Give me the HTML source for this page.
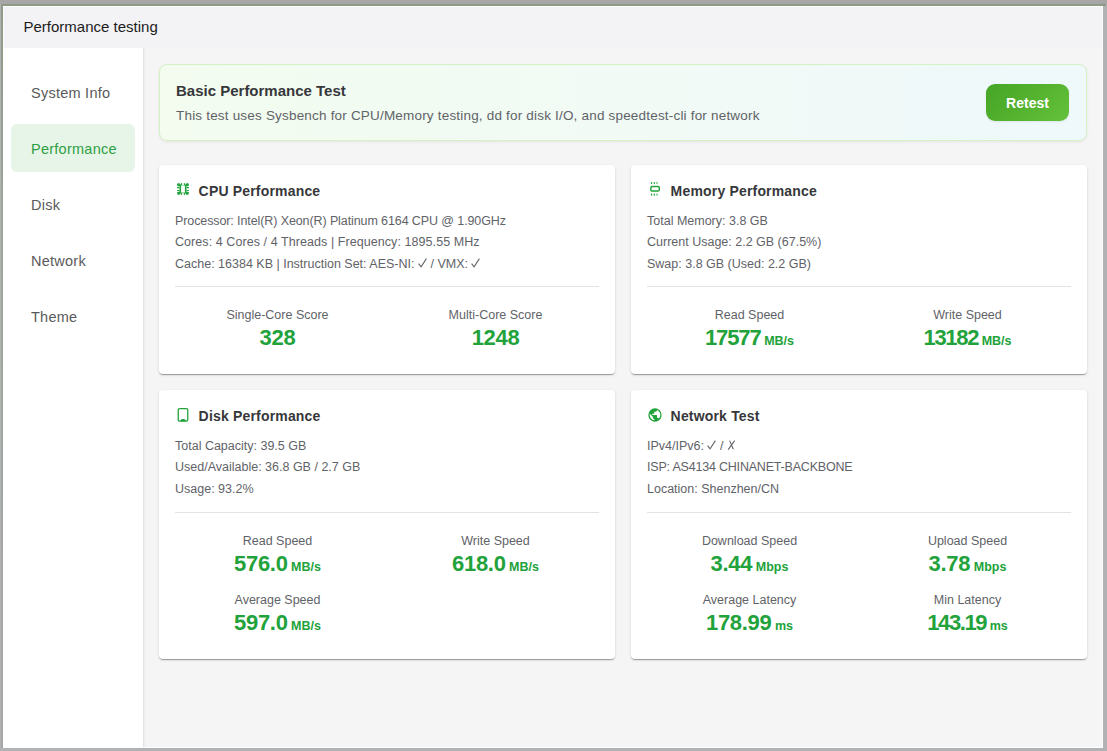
<!DOCTYPE html>
<html><head><meta charset="utf-8"><title>Performance testing</title>
<style>
html,body{margin:0;padding:0;}
body{width:1107px;height:751px;overflow:hidden;position:relative;background:#b1b2b4;font-family:"Liberation Sans", sans-serif;}
.t{position:absolute;white-space:nowrap;font-family:"Liberation Sans", sans-serif;}
#dlg{position:absolute;left:3px;top:6px;width:1100px;height:742px;background:#f5f5f5;overflow:hidden;}
#hdr{position:absolute;left:0;top:0;width:1100px;height:41px;background:#f3f2f5;}
#side{position:absolute;left:0;top:42px;width:140px;height:700px;background:#ffffff;box-shadow:1px 0 0 #e4e4e4, 2px 0 2px rgba(0,0,0,0.04);}
</style></head>
<body>
<div style="position:absolute;left:0;top:0;width:1107px;height:4px;background:#a6a6a6;"></div><div style="position:absolute;left:1px;top:4px;width:1105px;height:2px;background:#8c9a86;"></div><div style="position:absolute;left:1px;top:4px;width:2px;height:744px;background:linear-gradient(#8c9a86,#9ea69b 30%,#a7a7a7);"></div>
<div id="dlg"><div id="hdr"></div><div id="side"></div><div style="position:absolute;left:0;top:0;right:0;bottom:0;box-shadow:inset 0 0 0 1px rgba(255,255,255,0.75);"></div></div>
<div id="top" style="position:absolute;left:0;top:0;width:1107px;height:751px;">
<div class="t" style="left:23.50px;top:17.05px;font-size:15px;line-height:19.5px;font-weight:400;color:#1c1c1c;">Performance testing</div>
<div style="position:absolute;left:11px;top:124px;width:124px;height:48px;background:#e7f5e9;border-radius:6px;"></div>
<div class="t" style="left:31.00px;top:83.55px;font-size:14.5px;line-height:18.85px;font-weight:400;color:#5a5a5a;letter-spacing:0.25px;">System Info</div>
<div class="t" style="left:31.00px;top:139.55px;font-size:14.5px;line-height:18.85px;font-weight:400;color:#2ea043;letter-spacing:0.25px;">Performance</div>
<div class="t" style="left:31.00px;top:195.55px;font-size:14.5px;line-height:18.85px;font-weight:400;color:#5a5a5a;letter-spacing:0.25px;">Disk</div>
<div class="t" style="left:31.00px;top:251.55px;font-size:14.5px;line-height:18.85px;font-weight:400;color:#5a5a5a;letter-spacing:0.25px;">Network</div>
<div class="t" style="left:31.00px;top:307.55px;font-size:14.5px;line-height:18.85px;font-weight:400;color:#5a5a5a;letter-spacing:0.25px;">Theme</div>
<div style="position:absolute;left:159px;top:64px;width:928px;height:77px;box-sizing:border-box;border:1px solid #d4f1c4;border-radius:8px;background:linear-gradient(90deg,#f3fcef 0%,#f1faf6 60%,#eff8fb 100%);box-shadow:0 1px 3px rgba(0,0,0,0.07);"></div>
<div class="t" style="left:176.00px;top:80.85px;font-size:15px;line-height:19.5px;font-weight:700;color:#36373a;">Basic Performance Test</div>
<div class="t" style="left:176.00px;top:107.35px;font-size:13.5px;line-height:17.55px;font-weight:400;color:#5f6368;letter-spacing:0.19px;">This test uses Sysbench for CPU/Memory testing, dd for disk I/O, and speedtest-cli for network</div>
<div style="position:absolute;left:986px;top:84px;width:83px;height:37px;border-radius:9px;background:linear-gradient(135deg,#45a526 0%,#55b22f 50%,#63c13a 100%);box-shadow:0 1px 2px rgba(0,0,0,0.08);"></div>
<div class="t" style="left:986.00px;width:83px;text-align:center;top:93.55px;font-size:14px;line-height:18.2px;font-weight:700;color:#ffffff;">Retest</div>
<div style="position:absolute;left:159px;top:165px;width:456px;height:209.4px;background:#fff;border-radius:4px;box-shadow:0 2px 1px -1px rgba(0,0,0,.2),0 1px 1px 0 rgba(0,0,0,.14),0 1px 3px 0 rgba(0,0,0,.12);"></div>
<svg style="position:absolute;left:177px;top:183px" width="12" height="12" viewBox="0 0 12 12"><g fill="#22a23a">
<rect x="0.2" y="0.2" width="3" height="3" rx="1"/><rect x="8.8" y="0.2" width="3" height="3" rx="1"/><rect x="0.2" y="8.8" width="3" height="3" rx="1"/><rect x="8.8" y="8.8" width="3" height="3" rx="1"/>
<rect x="2.5" y="1.5" width="1.6" height="9"/><rect x="7.9" y="1.5" width="1.6" height="9"/>
<rect x="0" y="4.1" width="2.6" height="1.1" rx="0.5"/><rect x="0" y="6.9" width="2.6" height="1.1" rx="0.5"/><rect x="9.4" y="4.1" width="2.6" height="1.1" rx="0.5"/><rect x="9.4" y="6.9" width="2.6" height="1.1" rx="0.5"/>
<rect x="4.05" y="0" width="1.1" height="2.2" rx="0.5"/><rect x="6.85" y="0" width="1.1" height="2.2" rx="0.5"/><rect x="4.05" y="9.8" width="1.1" height="2.2" rx="0.5"/><rect x="6.85" y="9.8" width="1.1" height="2.2" rx="0.5"/>
<rect x="4.1" y="2" width="3.8" height="0.7" opacity="0.5"/><rect x="4.1" y="9.1" width="3.8" height="0.8" opacity="0.5"/>
</g></svg>
<div class="t" style="left:198.60px;top:181.85px;font-size:14px;line-height:18.2px;font-weight:700;color:#36373a;letter-spacing:0.18px;">CPU Performance</div>
<div class="t" style="left:175.00px;top:212.54px;font-size:12.5px;line-height:16.25px;font-weight:400;color:#5f6368;letter-spacing:-0.1px;">Processor: Intel(R) Xeon(R) Platinum 6164 CPU @ 1.90GHz</div>
<div class="t" style="left:175.00px;top:234.04px;font-size:12.5px;line-height:16.25px;font-weight:400;color:#5f6368;letter-spacing:0.07px;">Cores: 4 Cores / 4 Threads | Frequency: 1895.55 MHz</div>
<div class="t" style="left:175.00px;top:255.54px;font-size:12.5px;line-height:16.25px;font-weight:400;color:#5f6368;">Cache: 16384 KB | Instruction Set: AES-NI: <svg style="display:inline-block;vertical-align:0px" width="9" height="10" viewBox="0 0 9 10"><path d="M0.6 5.6 L3.1 8.9 L8.4 0.6" fill="none" stroke="#606266" stroke-width="1.05"/></svg> / VMX: <svg style="display:inline-block;vertical-align:0px" width="9" height="10" viewBox="0 0 9 10"><path d="M0.6 5.6 L3.1 8.9 L8.4 0.6" fill="none" stroke="#606266" stroke-width="1.05"/></svg></div>
<div style="position:absolute;left:175px;top:286.0px;width:424px;height:1px;background:#e3e3e3;"></div>
<div class="t" style="left:177.50px;width:200px;text-align:center;top:306.84px;font-size:12.5px;line-height:16.25px;font-weight:400;color:#5f6368;">Single-Core Score</div>
<div class="t" style="left:177.50px;width:200px;text-align:center;top:324.08px;font-size:22px;line-height:28.6px;font-weight:700;color:#22a23a;letter-spacing:-0.3px;">328</div>
<div class="t" style="left:395.50px;width:200px;text-align:center;top:306.84px;font-size:12.5px;line-height:16.25px;font-weight:400;color:#5f6368;">Multi-Core Score</div>
<div class="t" style="left:395.50px;width:200px;text-align:center;top:324.08px;font-size:22px;line-height:28.6px;font-weight:700;color:#22a23a;letter-spacing:-0.3px;">1248</div>
<div style="position:absolute;left:631px;top:165px;width:456px;height:209.4px;background:#fff;border-radius:4px;box-shadow:0 2px 1px -1px rgba(0,0,0,.2),0 1px 1px 0 rgba(0,0,0,.14),0 1px 3px 0 rgba(0,0,0,.12);"></div>
<svg style="position:absolute;left:650px;top:182px" width="11" height="15" viewBox="0 0 11 15"><g fill="#22a23a">
<ellipse cx="1.55" cy="1.1" rx="0.7" ry="1.05"/><ellipse cx="4.35" cy="1.1" rx="0.7" ry="1.05"/><ellipse cx="7" cy="1.1" rx="0.75" ry="1.05" opacity="0.75"/>
<ellipse cx="1.55" cy="12.7" rx="0.7" ry="1.15"/><ellipse cx="4.35" cy="12.7" rx="0.7" ry="1.15"/><ellipse cx="7" cy="12.7" rx="0.75" ry="1.15" opacity="0.75"/>
</g><rect x="0.85" y="4.46" width="8.45" height="4.6" rx="1.3" fill="none" stroke="#22a23a" stroke-width="1.45"/></svg>
<div class="t" style="left:670.60px;top:181.85px;font-size:14px;line-height:18.2px;font-weight:700;color:#36373a;letter-spacing:0.18px;">Memory Performance</div>
<div class="t" style="left:647.00px;top:212.54px;font-size:12.5px;line-height:16.25px;font-weight:400;color:#5f6368;">Total Memory: 3.8 GB</div>
<div class="t" style="left:647.00px;top:234.04px;font-size:12.5px;line-height:16.25px;font-weight:400;color:#5f6368;">Current Usage: 2.2 GB (67.5%)</div>
<div class="t" style="left:647.00px;top:255.54px;font-size:12.5px;line-height:16.25px;font-weight:400;color:#5f6368;">Swap: 3.8 GB (Used: 2.2 GB)</div>
<div style="position:absolute;left:647px;top:286.0px;width:424px;height:1px;background:#e3e3e3;"></div>
<div class="t" style="left:649.50px;width:200px;text-align:center;top:306.84px;font-size:12.5px;line-height:16.25px;font-weight:400;color:#5f6368;">Read Speed</div>
<div class="t" style="left:649.50px;width:200px;text-align:center;top:324.08px;font-size:22px;line-height:28.6px;font-weight:700;color:#22a23a;letter-spacing:-1.1px;">17577<span style="font-size:12.5px;margin-left:3.5px;letter-spacing:0;">MB/s</span></div>
<div class="t" style="left:867.50px;width:200px;text-align:center;top:306.84px;font-size:12.5px;line-height:16.25px;font-weight:400;color:#5f6368;">Write Speed</div>
<div class="t" style="left:867.50px;width:200px;text-align:center;top:324.08px;font-size:22px;line-height:28.6px;font-weight:700;color:#22a23a;letter-spacing:-1.3px;">13182<span style="font-size:12.5px;margin-left:3.5px;letter-spacing:0;">MB/s</span></div>
<div style="position:absolute;left:159px;top:390px;width:456px;height:269px;background:#fff;border-radius:4px;box-shadow:0 2px 1px -1px rgba(0,0,0,.2),0 1px 1px 0 rgba(0,0,0,.14),0 1px 3px 0 rgba(0,0,0,.12);"></div>
<svg style="position:absolute;left:177px;top:407px" width="12" height="16" viewBox="0 0 12 16"><rect x="1.25" y="1.65" width="9.5" height="12.45" rx="1.4" fill="none" stroke="#22a23a" stroke-width="1.3"/><path fill="#22a23a" d="M3.1 14.2 q0.6 -2.2 2.4 -2.2 h1.2 q1.8 0 2.4 2.2z"/></svg>
<div class="t" style="left:198.60px;top:406.85px;font-size:14px;line-height:18.2px;font-weight:700;color:#36373a;letter-spacing:0.18px;">Disk Performance</div>
<div class="t" style="left:175.00px;top:437.54px;font-size:12.5px;line-height:16.25px;font-weight:400;color:#5f6368;">Total Capacity: 39.5 GB</div>
<div class="t" style="left:175.00px;top:459.04px;font-size:12.5px;line-height:16.25px;font-weight:400;color:#5f6368;">Used/Available: 36.8 GB / 2.7 GB</div>
<div class="t" style="left:175.00px;top:480.54px;font-size:12.5px;line-height:16.25px;font-weight:400;color:#5f6368;">Usage: 93.2%</div>
<div style="position:absolute;left:175px;top:511.7px;width:424px;height:1px;background:#e3e3e3;"></div>
<div class="t" style="left:177.50px;width:200px;text-align:center;top:532.84px;font-size:12.5px;line-height:16.25px;font-weight:400;color:#5f6368;">Read Speed</div>
<div class="t" style="left:177.50px;width:200px;text-align:center;top:550.08px;font-size:22px;line-height:28.6px;font-weight:700;color:#22a23a;letter-spacing:-0.3px;">576.0<span style="font-size:12.5px;margin-left:3.5px;letter-spacing:0;">MB/s</span></div>
<div class="t" style="left:395.50px;width:200px;text-align:center;top:532.84px;font-size:12.5px;line-height:16.25px;font-weight:400;color:#5f6368;">Write Speed</div>
<div class="t" style="left:395.50px;width:200px;text-align:center;top:550.08px;font-size:22px;line-height:28.6px;font-weight:700;color:#22a23a;letter-spacing:-0.3px;">618.0<span style="font-size:12.5px;margin-left:3.5px;letter-spacing:0;">MB/s</span></div>
<div class="t" style="left:177.50px;width:200px;text-align:center;top:592.04px;font-size:12.5px;line-height:16.25px;font-weight:400;color:#5f6368;">Average Speed</div>
<div class="t" style="left:177.50px;width:200px;text-align:center;top:609.28px;font-size:22px;line-height:28.6px;font-weight:700;color:#22a23a;letter-spacing:-0.3px;">597.0<span style="font-size:12.5px;margin-left:3.5px;letter-spacing:0;">MB/s</span></div>
<div style="position:absolute;left:631px;top:390px;width:456px;height:269px;background:#fff;border-radius:4px;box-shadow:0 2px 1px -1px rgba(0,0,0,.2),0 1px 1px 0 rgba(0,0,0,.14),0 1px 3px 0 rgba(0,0,0,.12);"></div>
<svg style="position:absolute;left:647px;top:406.7px" width="16" height="16" viewBox="0 0 24 24"><path fill="#22a23a" fill-rule="evenodd" d="M17.9,17.39C17.64,16.59 16.89,16 16,16H15V13A1,1 0 0,0 14,12H8V10H10A1,1 0 0,0 11,9V7H13A2,2 0 0,0 15,5V4.59C17.930,5.770 20,8.640 20,12C20,14.080 19.200,15.970 17.900,17.390M11,19.930C7.050,19.440 4,16.080 4,12C4,11.380 4.080,10.780 4.210,10.210L9,15V16A2,2 0 0,0 11,18M12,2A10,10 0 0,0 2,12A10,10 0 0,0 12,22A10,10 0 0,0 22,12A10,10 0 0,0 12,2Z"/></svg>
<div class="t" style="left:670.60px;top:406.85px;font-size:14px;line-height:18.2px;font-weight:700;color:#36373a;letter-spacing:0.18px;">Network Test</div>
<div class="t" style="left:647.00px;top:437.54px;font-size:12.5px;line-height:16.25px;font-weight:400;color:#5f6368;">IPv4/IPv6: <svg style="display:inline-block;vertical-align:0px" width="9" height="10" viewBox="0 0 9 10"><path d="M0.6 5.6 L3.1 8.9 L8.4 0.6" fill="none" stroke="#606266" stroke-width="1.05"/></svg> / <svg style="display:inline-block;vertical-align:0px" width="9" height="10" viewBox="0 0 9 10"><path d="M2.6 0.6 L6.4 9.2 M7.6 0.6 L1.2 9.6" fill="none" stroke="#606266" stroke-width="1.05"/></svg></div>
<div class="t" style="left:647.00px;top:459.04px;font-size:12.5px;line-height:16.25px;font-weight:400;color:#5f6368;letter-spacing:-0.2px;">ISP: AS4134 CHINANET-BACKBONE</div>
<div class="t" style="left:647.00px;top:480.54px;font-size:12.5px;line-height:16.25px;font-weight:400;color:#5f6368;">Location: Shenzhen/CN</div>
<div style="position:absolute;left:647px;top:511.7px;width:424px;height:1px;background:#e3e3e3;"></div>
<div class="t" style="left:649.50px;width:200px;text-align:center;top:532.84px;font-size:12.5px;line-height:16.25px;font-weight:400;color:#5f6368;">Download Speed</div>
<div class="t" style="left:649.50px;width:200px;text-align:center;top:550.08px;font-size:22px;line-height:28.6px;font-weight:700;color:#22a23a;letter-spacing:-0.3px;">3.44<span style="font-size:12.5px;margin-left:3.5px;letter-spacing:0;">Mbps</span></div>
<div class="t" style="left:867.50px;width:200px;text-align:center;top:532.84px;font-size:12.5px;line-height:16.25px;font-weight:400;color:#5f6368;">Upload Speed</div>
<div class="t" style="left:867.50px;width:200px;text-align:center;top:550.08px;font-size:22px;line-height:28.6px;font-weight:700;color:#22a23a;letter-spacing:-0.3px;">3.78<span style="font-size:12.5px;margin-left:3.5px;letter-spacing:0;">Mbps</span></div>
<div class="t" style="left:649.50px;width:200px;text-align:center;top:592.04px;font-size:12.5px;line-height:16.25px;font-weight:400;color:#5f6368;">Average Latency</div>
<div class="t" style="left:649.50px;width:200px;text-align:center;top:609.28px;font-size:22px;line-height:28.6px;font-weight:700;color:#22a23a;letter-spacing:-0.3px;">178.99<span style="font-size:12.5px;margin-left:3.5px;letter-spacing:0;">ms</span></div>
<div class="t" style="left:867.50px;width:200px;text-align:center;top:592.04px;font-size:12.5px;line-height:16.25px;font-weight:400;color:#5f6368;">Min Latency</div>
<div class="t" style="left:867.50px;width:200px;text-align:center;top:609.28px;font-size:22px;line-height:28.6px;font-weight:700;color:#22a23a;letter-spacing:-1.4px;">143.19<span style="font-size:12.5px;margin-left:3.5px;letter-spacing:0;">ms</span></div>
</div>
</body></html>
